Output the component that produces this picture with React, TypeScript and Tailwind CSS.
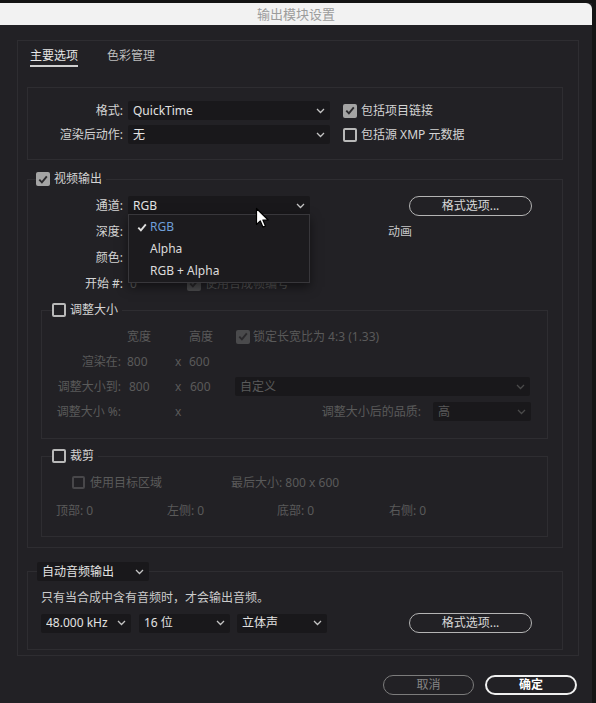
function Chevron({ className = "" }: { className?: string }) {
  return (
    <svg width="9" height="6" viewBox="0 0 9 6" className={className}>
      <path d="M1 1l3.5 3.5L8 1" fill="none" stroke="currentColor" strokeWidth="1.3" />
    </svg>
  );
}

function Check({ color }: { color: string }) {
  return (
    <svg width="10" height="9" viewBox="0 0 10 9">
      <path d="M1.3 4.6l2.6 2.8L8.8 1.4" fill="none" stroke={color} strokeWidth="1.9" />
    </svg>
  );
}

type BoxKind = "on" | "off" | "dim-on" | "dim-off";

function Box({ kind }: { kind: BoxKind }) {
  if (kind === "on")
    return (
      <span className="flex h-[14px] w-[14px] shrink-0 items-center justify-center rounded-[2px] bg-[#a4a4a4]">
        <Check color="#2b2a2d" />
      </span>
    );
  if (kind === "dim-on")
    return (
      <span className="flex h-[14px] w-[14px] shrink-0 items-center justify-center rounded-[2px] bg-[#4a4a4c]">
        <Check color="#2a292c" />
      </span>
    );
  if (kind === "dim-off")
    return <span className="h-[13px] w-[13px] shrink-0 rounded-[2px] border-2 border-[#48474a]" />;
  return <span className="h-[14px] w-[14px] shrink-0 rounded-[2px] border-2 border-[#b9b9b9]" />;
}

function Select({ w, value, dim = false }: { w: string; value: string; dim?: boolean }) {
  return (
    <div
      className={`flex h-[19px] shrink-0 items-center justify-between rounded-[2px] bg-[#19181b] pl-[5px] pr-[5px] ${w} ${
        dim ? "text-[#5a5a5a]" : "text-[#e2e2e2]"
      }`}
    >
      <span className="truncate">{value}</span>
      <Chevron className={dim ? "text-[#4a4a4a]" : "text-[#c4c4c4]"} />
    </div>
  );
}

function PillButton({ label }: { label: string }) {
  return (
    <div className="flex h-[20px] w-[123px] shrink-0 items-center justify-center rounded-full border-[1.5px] border-[#b4b4b4] text-[#d8d8d8]">
      {label}
    </div>
  );
}

export default function App() {
  return (
    <div className="relative flex h-[703px] w-[596px] overflow-hidden bg-[#151515] font-['Noto_Sans','Noto_Sans_CJK_SC',sans-serif] text-[12px] leading-[16px] text-[#d4d4d4]">
      <div className="flex h-full w-[592px] flex-col bg-[#222125]">
        <div className="h-[3px] bg-[#141414]" />
        <div className="flex h-[22px] items-center justify-center rounded-tr-[6px] bg-[#f2f2f2] text-[13px] text-[#9c9c9c]">
          输出模块设置
        </div>

        {/* main panel */}
        <div className="ml-[17px] mt-[15px] w-[562px] border border-[#2e2d31] pb-[5px]">
          <div className="flex pl-[12px] pt-[7px]">
            <span className="border-b-2 border-[#cfcfcf] pb-[1px] text-[#e6e6e6]">主要选项</span>
            <span className="ml-[29px] text-[#bdbdbd]">色彩管理</span>
          </div>

          {/* format */}
          <div className="ml-[9px] mt-[20px] flex w-[536px] flex-col gap-[5px] border border-[#2e2d31] pb-[15px] pt-[13px]">
            <div className="flex h-[19px] items-center">
              <span className="w-[95px] text-right">格式:</span>
              <div className="ml-[5px]">
                <Select w="w-[202px]" value="QuickTime" />
              </div>
              <div className="ml-[13px] flex items-center gap-[4px]">
                <Box kind="on" />
                <span>包括项目链接</span>
              </div>
            </div>
            <div className="flex h-[19px] items-center">
              <span className="w-[95px] text-right">渲染后动作:</span>
              <div className="ml-[5px]">
                <Select w="w-[202px]" value="无" />
              </div>
              <div className="ml-[13px] flex items-center gap-[4px]">
                <Box kind="off" />
                <span>包括源 XMP 元数据</span>
              </div>
            </div>
          </div>

          {/* video output */}
          <fieldset className="ml-[9px] mt-[11px] w-[536px] border border-[#2e2d31] pb-[10px]">
            <legend className="ml-[8px] flex h-[16px] items-center gap-[4px] pr-[4px]">
              <Box kind="on" />
              <span>视频输出</span>
            </legend>
            <div className="flex flex-col gap-[7px] pt-[9px]">
              <div className="flex h-[19px] items-center">
                <span className="w-[95px] text-right">通道:</span>
                <div className="ml-[5px]">
                  <Select w="w-[182px]" value="RGB" />
                </div>
                <div className="ml-[99px]">
                  <PillButton label="格式选项..." />
                </div>
              </div>
              <div className="flex h-[19px] items-center">
                <span className="w-[95px] text-right">深度:</span>
                <div className="ml-[5px]">
                  <Select w="w-[182px]" value="" />
                </div>
                <span className="ml-[78px] text-[#c8c8c8]">动画</span>
              </div>
              <div className="flex h-[19px] items-center">
                <span className="w-[95px] text-right">颜色:</span>
                <div className="ml-[5px]">
                  <Select w="w-[182px]" value="" />
                </div>
              </div>
              <div className="flex h-[19px] items-center">
                <span className="w-[95px] text-right">开始 #:</span>
                <span className="ml-[7px] text-[#5a5a5a]">0</span>
                <div className="ml-[50px] flex items-center gap-[4px] text-[#555]">
                  <Box kind="dim-on" />
                  <span>使用合成帧编号</span>
                </div>
              </div>
            </div>

            {/* resize */}
            <fieldset className="ml-[13px] mt-[9px] w-[507px] border border-[#2e2d31] pb-[17px]">
              <legend className="ml-[10px] flex h-[16px] items-center gap-[4px] pr-[4px]">
                <Box kind="off" />
                <span>调整大小</span>
              </legend>
              <div className="flex flex-col gap-[6px] pt-[9px] text-[#5a5a5a]">
                <div className="flex h-[19px] items-center">
                  <span className="w-[79px]" />
                  <span className="ml-[6px] w-[48px]">宽度</span>
                  <span className="w-[14px]" />
                  <span className="w-[46px]">高度</span>
                  <div className="ml-[1px] flex items-center gap-[3px]">
                    <Box kind="dim-on" />
                    <span>锁定长宽比为 4:3 (1.33)</span>
                  </div>
                </div>
                <div className="flex h-[19px] items-center">
                  <span className="w-[79px] text-right">渲染在:</span>
                  <span className="ml-[6px] w-[48px]">800</span>
                  <span className="w-[14px]">x</span>
                  <span className="w-[46px]">600</span>
                </div>
                <div className="flex h-[19px] items-center">
                  <span className="w-[79px] text-right">调整大小到:</span>
                  <span className="ml-[6px] w-[48px] pl-[2px]">800</span>
                  <span className="w-[14px]">x</span>
                  <span className="w-[46px] pl-[1px]">600</span>
                  <Select w="w-[295px]" value="自定义" dim />
                </div>
                <div className="flex h-[19px] items-center">
                  <span className="w-[79px] text-right">调整大小 %:</span>
                  <span className="ml-[6px] w-[48px]" />
                  <span className="w-[14px]">x</span>
                  <div className="flex flex-1 items-center justify-end gap-[12px] pr-[16px]">
                    <span>调整大小后的品质:</span>
                    <Select w="w-[98px]" value="高" dim />
                  </div>
                </div>
              </div>
            </fieldset>

            {/* crop */}
            <fieldset className="ml-[13px] mt-[9px] w-[507px] border border-[#2e2d31] pb-[16px]">
              <legend className="ml-[10px] flex h-[16px] items-center gap-[4px] pr-[4px]">
                <Box kind="off" />
                <span>裁剪</span>
              </legend>
              <div className="pt-[9px] text-[#5a5a5a]">
                <div className="flex h-[19px] items-center pl-[30px]">
                  <div className="flex w-[159px] items-center gap-[5px]">
                    <Box kind="dim-off" />
                    <span>使用目标区域</span>
                  </div>
                  <span>最后大小: 800 x 600</span>
                </div>
                <div className="mt-[9px] flex h-[19px] items-center pl-[14px]">
                  <span className="w-[111px]">顶部: 0</span>
                  <span className="w-[110px]">左侧: 0</span>
                  <span className="w-[112px]">底部: 0</span>
                  <span>右侧: 0</span>
                </div>
              </div>
            </fieldset>
          </fieldset>

          {/* audio */}
          <fieldset className="ml-[9px] mt-[14px] w-[536px] border border-[#2e2d31] pb-[16px]">
            <legend className="ml-[9px]">
              <Select w="w-[112px]" value="自动音频输出" />
            </legend>
            <div className="pl-[13px] pt-[9px] text-[#cbcbcb]">只有当合成中含有音频时，才会输出音频。</div>
            <div className="mt-[7px] flex items-center pl-[13px]">
              <Select w="w-[90px]" value="48.000 kHz" />
              <div className="ml-[8px]">
                <Select w="w-[91px]" value="16 位" />
              </div>
              <div className="ml-[7px]">
                <Select w="w-[90px]" value="立体声" />
              </div>
              <div className="ml-[82px]">
                <PillButton label="格式选项..." />
              </div>
            </div>
          </fieldset>
        </div>

        <div className="mt-[19px] flex justify-end gap-[11px] pr-[15px]">
          <div className="flex h-[20px] w-[91px] items-center justify-center rounded-full border-[1.5px] border-[#7c7c7c] text-[#858585]">
            取消
          </div>
          <div className="flex h-[20px] w-[92px] items-center justify-center rounded-full border-2 border-[#f0f0f0] font-bold text-white">
            确定
          </div>
        </div>
      </div>

      {/* open channel menu */}
      <div className="absolute left-[128px] top-[214px] flex h-[69px] w-[182px] flex-col border border-[#38373b] bg-[#1c1b1e] pt-[1px] shadow-[0_4px_10px_rgba(0,0,0,0.5)]">
        <div className="flex h-[22px] items-center pl-[4px] text-[#6f9fd8]">
          <span className="flex w-[17px] justify-center">
            <Check color="#e0e0e0" />
          </span>
          <span>RGB</span>
        </div>
        <div className="flex h-[22px] items-center pl-[21px] text-[#dcdcdc]">Alpha</div>
        <div className="flex h-[22px] items-center pl-[21px] text-[#dcdcdc]">RGB + Alpha</div>
      </div>

      {/* mouse pointer */}
      <svg className="absolute left-[255px] top-[207px]" width="14" height="22" viewBox="0 0 14 22">
        <path
          d="M1.5 1.5v16l3.8-3.6 2.6 6.2 2.6-1.1-2.6-6h5.3z"
          fill="#fff"
          stroke="#000"
          strokeWidth="1.2"
          strokeLinejoin="round"
        />
      </svg>
    </div>
  );
}
